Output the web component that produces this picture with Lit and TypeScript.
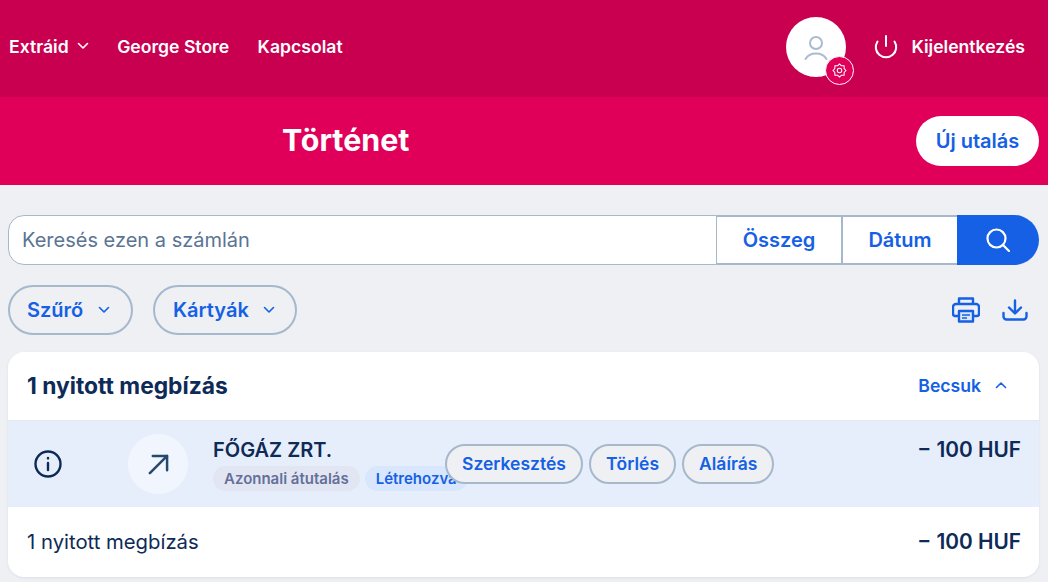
import { LitElement, html, css } from 'lit';
import { customElement } from 'lit/decorators.js';

const chevron = (up = false) => html`
  <svg class="chev" width="12" height="12" viewBox="0 0 12 12" fill="none" stroke="currentColor" stroke-width="1.6" stroke-linecap="round" stroke-linejoin="round">
    <path d=${up ? 'M1.5 8.5L6 4l4.5 4.5' : 'M1.5 3.5L6 8l4.5-4.5'}></path>
  </svg>`;

// gear outline: 8 teeth, alternating outer and inner radius
const gearPoints = Array.from({ length: 16 }, (_, i) => {
  const r = i % 2 ? 5.4 : 7;
  const a = (i * Math.PI) / 8;
  return `${(8 + r * Math.cos(a)).toFixed(2)},${(8 + r * Math.sin(a)).toFixed(2)}`;
}).join(' ');

@customElement('app-root')
export class AppRoot extends LitElement {
  static styles = css`
    :host {
      display: block;
      min-height: 582px;
      background: #eef0f4;
      font-family: Inter, 'Liberation Sans', sans-serif;
      color: #0e2a56;
      overflow: hidden;
    }
    .top {
      height: 97px;
      background: #c8004f;
      color: #fff;
      display: flex;
      align-items: center;
      padding: 0 23px 3px 9px;
      box-sizing: border-box;
      font-size: 17.6px;
      font-weight: 600;
    }
    .nav {
      display: flex;
      align-items: center;
      gap: 28.5px;
      flex: 1;
      padding-bottom: 2px;
    }
    .nav .drop {
      display: flex;
      align-items: center;
      gap: 8px;
    }
    .avatar {
      width: 60px;
      height: 60px;
      border-radius: 50%;
      background: #fff;
      position: relative;
      display: flex;
      align-items: center;
      justify-content: center;
      margin-right: 28px;
    }
    .avatar > svg {
      margin-top: 2px;
    }
    .gear {
      position: absolute;
      left: 39px;
      top: 39px;
      width: 29px;
      height: 29px;
      box-sizing: border-box;
      border-radius: 50%;
      background: #e0005a;
      border: 1px solid #fff;
      display: flex;
      align-items: center;
      justify-content: center;
    }
    .logout {
      display: flex;
      align-items: center;
      gap: 13px;
    }
    .logout span {
      padding-bottom: 2px;
    }
    .sub {
      height: 88px;
      background: #e0005a;
      display: flex;
      align-items: center;
      justify-content: space-between;
      padding: 0 9px 0 282px;
      box-sizing: border-box;
    }
    .sub h1 {
      margin: 0 0 2px;
      color: #fff;
      font-size: 30.4px;
      font-weight: 700;
    }
    .new {
      width: 123px;
      height: 50px;
      border-radius: 25px;
      background: #fff;
      color: #1560e4;
      display: flex;
      align-items: center;
      justify-content: center;
      font-size: 20px;
      font-weight: 600;
    }
    .content {
      padding: 30px 9px 0 8px;
    }
    .search {
      display: flex;
      height: 50px;
      font-size: 20px;
    }
    .field {
      flex: 1;
      box-sizing: border-box;
      background: #fff;
      border: 1px solid #a5b8cc;
      border-radius: 16px 0 0 16px;
      display: flex;
      align-items: center;
      padding-left: 13px;
      color: #5a7493;
    }
    .seg {
      box-sizing: border-box;
      background: #fff;
      border: 2px solid #a5b8cc;
      border-left: 0;
      color: #1560e4;
      font-weight: 600;
      display: flex;
      align-items: center;
      justify-content: center;
      width: 126px;
    }
    .seg.date {
      width: 114px;
      border-right: 0;
    }
    .go {
      width: 82px;
      background: #1560e4;
      border-radius: 0 25px 25px 0;
      display: flex;
      align-items: center;
      justify-content: center;
    }
    .tools {
      display: flex;
      align-items: center;
      margin-top: 20px;
      gap: 20px;
    }
    .pill {
      box-sizing: border-box;
      height: 50px;
      border: 2px solid #a5b8cc;
      border-radius: 25px;
      color: #1560e4;
      font-size: 20px;
      font-weight: 600;
      display: flex;
      align-items: center;
      gap: 15px;
    }
    .pill.a {
      width: 125px;
      padding-left: 17px;
    }
    .pill.b {
      width: 144px;
      padding-left: 18px;
      gap: 14px;
    }
    .icons {
      margin-left: auto;
      display: flex;
      align-items: center;
      gap: 22px;
      padding-right: 11px;
      color: #1560e4;
    }
    .card {
      margin-top: 17px;
      background: #fff;
      border-radius: 16px;
      overflow: hidden;
      box-shadow: 0 1px 3px rgba(14, 42, 86, 0.08);
    }
    .card-head {
      height: 69px;
      box-sizing: border-box;
      display: flex;
      align-items: center;
      justify-content: space-between;
      padding: 0 32px 2px 19px;
      border-bottom: 1px solid #e3e8f0;
    }
    .card-head b {
      font-size: 22.8px;
      font-weight: 700;
    }
    .toggle {
      display: flex;
      align-items: center;
      gap: 14px;
      color: #1560e4;
      font-size: 17.6px;
      font-weight: 600;
    }
    .row {
      height: 86px;
      background: #e7eefb;
      position: relative;
      display: flex;
      padding-left: 26px;
      box-sizing: border-box;
    }
    .info {
      width: 28px;
      margin-top: 29px;
    }
    .circle {
      width: 60px;
      height: 60px;
      margin: 13px 25px 0 66px;
      border-radius: 50%;
      background: #f1f6fe;
      display: flex;
      align-items: center;
      justify-content: center;
    }
    .who {
      padding-top: 17px;
    }
    .name {
      font-size: 20px;
      font-weight: 600;
      line-height: 24px;
    }
    .tags {
      display: flex;
      gap: 5px;
      margin-top: 4px;
    }
    .tag {
      height: 25px;
      border-radius: 13px;
      padding: 0 11px;
      display: flex;
      align-items: center;
      font-size: 15px;
      font-weight: 600;
      background: #e1e6f2;
      color: #65709a;
    }
    .tag.blue {
      background: #d8e7fd;
      color: #1560e4;
    }
    .actions {
      position: absolute;
      left: 437px;
      top: 23px;
      display: flex;
      gap: 6px;
    }
    .act {
      box-sizing: border-box;
      height: 40px;
      padding: 0 15px 2px;
      border: 2px solid #a5b8cc;
      border-radius: 20px;
      background: #eef0f4;
      color: #1560e4;
      font-size: 17.5px;
      font-weight: 600;
      display: flex;
      align-items: center;
    }
    .amount {
      margin-left: auto;
      padding: 17px 18px 0 0;
      font-size: 20.8px;
      font-weight: 600;
      line-height: 24px;
    }
    .foot {
      height: 70px;
      display: flex;
      align-items: center;
      justify-content: space-between;
      padding: 0 18px 0 19px;
      font-size: 20.3px;
    }
    .foot .label {
      padding-bottom: 2px;
    }
    .foot .amount {
      padding: 0;
    }
  `;

  render() {
    return html`
      <div class="top">
        <div class="nav">
          <span class="drop">Extráid ${chevron()}</span>
          <span>George Store</span>
          <span>Kapcsolat</span>
        </div>
        <div class="avatar">
          <svg width="26" height="26" viewBox="0 0 26 26" fill="none" stroke="#a9bccf" stroke-width="2" stroke-linecap="round">
            <circle cx="13" cy="8" r="6"></circle>
            <path d="M2.5 24C5 20 9 18.5 13 18.5S21 20 23.5 24"></path>
          </svg>
          <span class="gear">
            <svg width="15" height="15" viewBox="0 0 16 16" fill="none" stroke="#fff" stroke-width="1.1" stroke-linejoin="round">
              <polygon points=${gearPoints}></polygon>
              <circle cx="8" cy="8" r="2.4"></circle>
            </svg>
          </span>
        </div>
        <div class="logout">
          <svg width="24" height="24" viewBox="0 0 24 24" fill="none" stroke="#fff" stroke-width="2" stroke-linecap="round">
            <path d="M12 1v10"></path>
            <path d="M3.5 6.5a10.2 10.2 0 1 0 17 0"></path>
          </svg>
          <span>Kijelentkezés</span>
        </div>
      </div>
      <div class="sub">
        <h1>Történet</h1>
        <div class="new">Új utalás</div>
      </div>
      <div class="content">
        <div class="search">
          <div class="field">Keresés ezen a számlán</div>
          <div class="seg">Összeg</div>
          <div class="seg date">Dátum</div>
          <div class="go">
            <svg width="24" height="24" viewBox="0 0 24 24" fill="none" stroke="#fff" stroke-width="2.2" stroke-linecap="round">
              <circle cx="10.5" cy="10.5" r="9"></circle>
              <path d="M17 17l6 6"></path>
            </svg>
          </div>
        </div>
        <div class="tools">
          <div class="pill a">Szűrő ${chevron()}</div>
          <div class="pill b">Kártyák ${chevron()}</div>
          <div class="icons">
            <svg width="28" height="26" viewBox="0 0 28 26" fill="none" stroke="currentColor" stroke-width="2.4" stroke-linejoin="round">
              <path d="M7 7V1.5h14V7"></path>
              <path d="M7 19H3a2 2 0 0 1-2-2v-7a3 3 0 0 1 3-3h20a3 3 0 0 1 3 3v7a2 2 0 0 1-2 2h-4"></path>
              <path d="M7 14h14v10.5H7z" fill="#dbe6fb"></path>
              <path d="M10 18h8M10 21h5" stroke-width="1.4"></path>
            </svg>
            <svg width="26" height="22" viewBox="0 0 26 22" fill="none" stroke="currentColor" stroke-width="2.4" stroke-linecap="round" stroke-linejoin="round">
              <path d="M13 1.500v12.500M7 8.500l6 6 6-6"></path>
              <path d="M1.500 14v3.500a3 3 0 0 0 3 3h17a3 3 0 0 0 3-3V14"></path>
            </svg>
          </div>
        </div>
        <div class="card">
          <div class="card-head">
            <b>1 nyitott megbízás</b>
            <span class="toggle">Becsuk ${chevron(true)}</span>
          </div>
          <div class="row">
            <div class="info">
              <svg width="28" height="28" viewBox="0 0 28 28" fill="none" stroke="#0e2a56" stroke-width="2.4" stroke-linecap="round">
                <circle cx="14" cy="14" r="12.5"></circle>
                <path d="M14 13v7"></path>
                <path d="M14 8v.4"></path>
              </svg>
            </div>
            <div class="circle">
              <svg width="21" height="21" viewBox="0 0 22 22" fill="none" stroke="#25496e" stroke-width="2.6" stroke-linecap="round" stroke-linejoin="round">
                <path d="M2 20L20 2"></path>
                <path d="M5 2h15v15"></path>
              </svg>
            </div>
            <div class="who">
              <div class="name">FŐGÁZ ZRT.</div>
              <div class="tags">
                <span class="tag">Azonnali átutalás</span>
                <span class="tag blue">Létrehozva</span>
              </div>
            </div>
            <div class="actions">
              <span class="act">Szerkesztés</span>
              <span class="act">Törlés</span>
              <span class="act">Aláírás</span>
            </div>
            <div class="amount">− 100 HUF</div>
          </div>
          <div class="foot">
            <span class="label">1 nyitott megbízás</span>
            <span class="amount">− 100 HUF</span>
          </div>
        </div>
      </div>
    `;
  }
}
